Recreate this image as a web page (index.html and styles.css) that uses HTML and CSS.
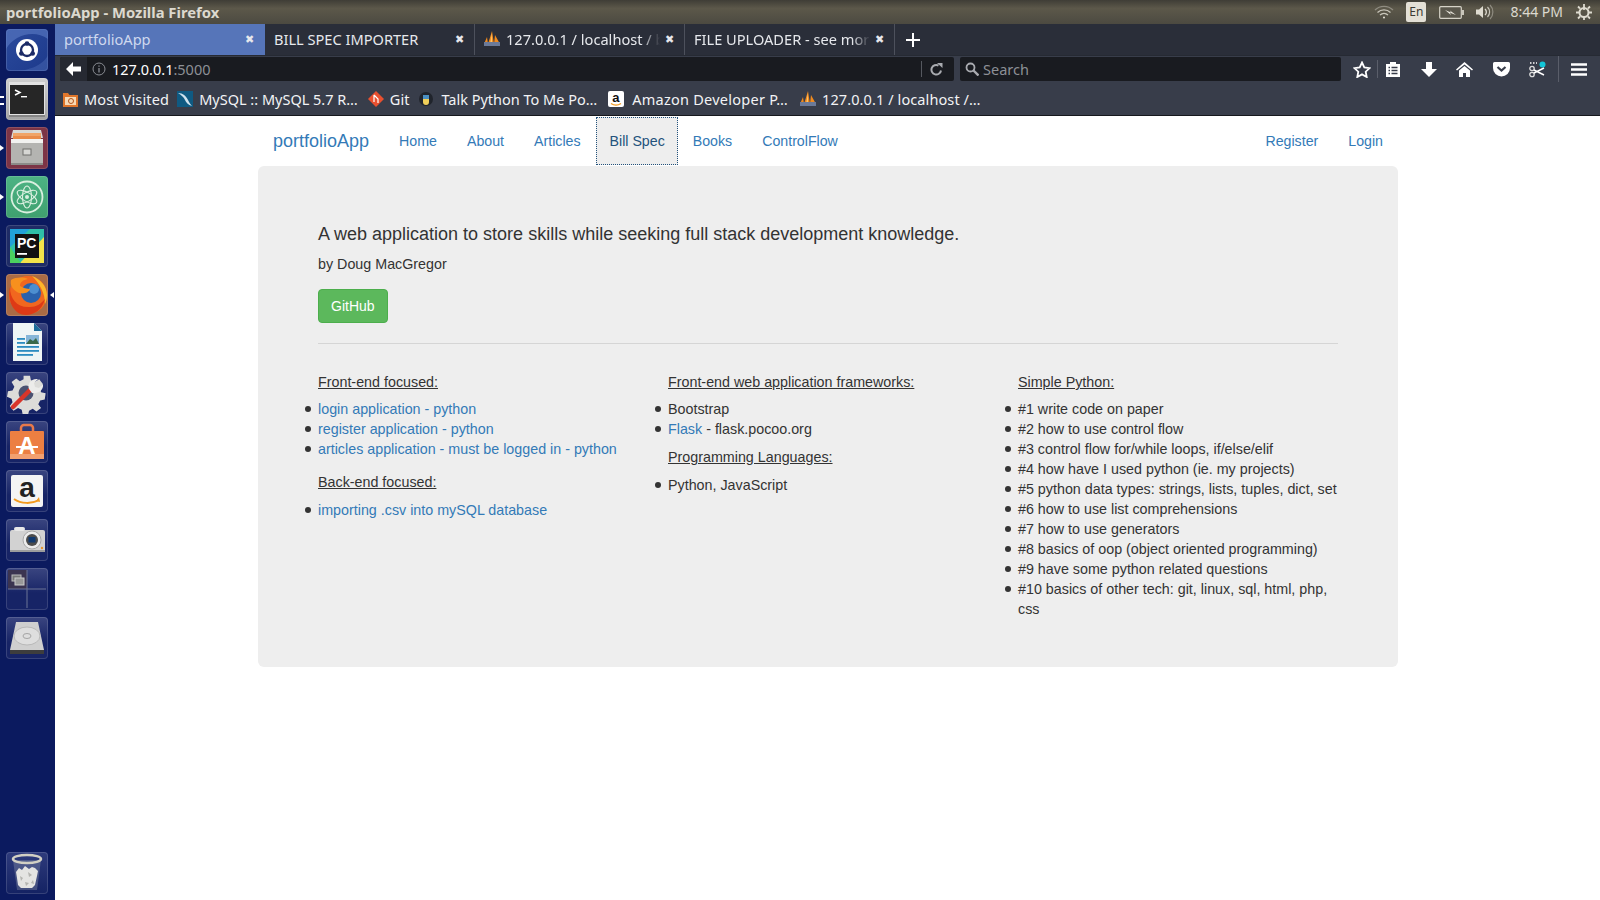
FILE: index.html
```html
<!DOCTYPE html>
<html lang="en">
<head>
    <meta charset="UTF-8">
    <title>portfolioApp - Mozilla Firefox</title>
    <link rel="stylesheet" href="styles.css">
</head>
<body>
    <svg class="defs" width="0" height="0">
        <symbol id="pma" viewBox="0 0 18 16">
            <path d="M1 13 4 6l1 7zM5 13 9 0l2 13zM11 13l1-9 5 9z" fill="#f08a1d"/>
            <path d="M7 13 9 2v11z" fill="#ffc56a"/>
            <rect x="1" y="11" width="16" height="4" fill="#6b7a99"/>
        </symbol>
    </svg>

    <div class="topbar">
        <span class="win-title">portfolioApp - Mozilla Firefox</span>
        <div class="tray">
            <svg class="wifi" width="20" height="14" viewBox="0 0 20 14" fill="none" stroke="#c9c6bb" stroke-width="1.3"><path d="M1 5a13 13 0 0 1 18 0" stroke="#8f8c81"/><path d="M3.5 7.5a9.5 9.5 0 0 1 13 0"/><path d="M6 10a6 6 0 0 1 8 0"/><circle cx="10" cy="12.5" r="1" fill="#e6e3d9" stroke="none"/></svg>
            <span class="lang-box">En</span>
            <svg class="battery" width="25" height="13" viewBox="0 0 25 13"><rect x=".7" y=".7" width="21.600" height="11.600" rx="1" fill="#5a574c" stroke="#d5d2c7" stroke-width="1.200"/><rect x="23" y="4" width="2" height="5" fill="#c9c6bb"/><path d="M6 4l6 2.400L11 4.500 17 9l-6-2.200L12 9z" fill="#e6e3d9"/></svg>
            <svg class="speaker" width="20" height="16" viewBox="0 0 20 16" fill="none"><path d="M1 5.500h3L8 2v12l-4-3.500H1z" fill="#dedbd0"/><path d="M10 5a4 4 0 0 1 0 6" stroke="#dedbd0" stroke-width="1.300"/><path d="M12.500 3a7 7 0 0 1 0 10" stroke="#c9c6bb" stroke-width="1.200"/><path d="M15 1a10 10 0 0 1 0 14" stroke="#8f8c81" stroke-width="1.200"/></svg>
            <span class="clock">8:44 PM</span>
            <svg class="power" width="16" height="16" viewBox="0 0 16 16" fill="none" stroke="#dedbd0" stroke-width="2"><circle cx="8" cy="8.500" r="4.500"/><path d="M8 0v6M8 13v3M0 8.500h3M13 8.500h3M2 2.500l2 2M14 2.500l-2 2M2 14.500l2-2M14 14.500l-2-2" stroke-width="1.800"/></svg>
        </div>
    </div>

    <div class="desktop">
        <aside class="dock">
            <div class="launcher">
                <div class="tile tile-ubuntu">
                    <svg width="42" height="42" viewBox="0 0 42 42"><path d="M0 20C8 6 28 0 42 10V0H0z" fill="#5b7cc4" opacity=".6"/><path d="M42 26C36 38 20 42 8 42h34z" fill="#5b7cc4" opacity=".35"/><circle cx="21" cy="21" r="11" fill="#fff"/><circle cx="21" cy="21" r="6" fill="none" stroke="#1b2a66" stroke-width="2.400"/><circle cx="21" cy="14.500" r="2.300" fill="#1b2a66"/><circle cx="15.300" cy="24.500" r="2.300" fill="#1b2a66"/><circle cx="26.700" cy="24.500" r="2.300" fill="#1b2a66"/></svg>
                </div>
            </div>
            <div class="launcher launcher-double">
                <div class="tile tile-terminal">
                    <svg width="42" height="42" viewBox="0 0 42 42"><rect x="3" y="4" width="36" height="34" fill="#e2e2e2"/><rect x="4" y="7" width="34" height="29" fill="#262626"/><path d="M9 12l5 2.500L9 17" fill="none" stroke="#fff" stroke-width="1.500"/><rect x="15" y="18" width="6" height="1.400" fill="#fff"/><rect x="3" y="37" width="36" height="2" fill="#858585"/></svg>
                </div>
            </div>
            <div class="launcher launcher-running">
                <div class="tile tile-files">
                    <svg width="42" height="42" viewBox="0 0 42 42"><path d="M7 3h28l2 8H5z" fill="#d9d9d6"/><rect x="7" y="6" width="28" height="3" fill="#f0a468"/><rect x="7" y="9" width="28" height="3" fill="#e98b4a"/><rect x="5" y="12" width="32" height="4" fill="#f2f2f0"/><rect x="5" y="16" width="32" height="22" fill="#b4b4b1"/><rect x="5" y="36" width="32" height="2" fill="#8b8b88"/><rect x="17" y="22" width="8" height="6" fill="#d6d6d3" stroke="#6f6f6c"/></svg>
                </div>
            </div>
            <div class="launcher launcher-running">
                <div class="tile tile-atom">
                    <svg width="42" height="42" viewBox="0 0 42 42" fill="none" stroke="#d9efdf" stroke-width="1.100"><circle cx="21" cy="21" r="15.500" stroke-width="1.800"/><ellipse cx="21" cy="21" rx="11" ry="4.500" transform="rotate(30 21 21)"/><ellipse cx="21" cy="21" rx="11" ry="4.500" transform="rotate(-30 21 21)"/><ellipse cx="21" cy="21" rx="4.500" ry="11"/><circle cx="21" cy="21" r="2" fill="#d9efdf" stroke="none"/></svg>
                </div>
            </div>
            <div class="launcher">
                <div class="tile tile-pycharm">
                    <svg width="42" height="42" viewBox="0 0 42 42"><rect x="4" y="4" width="34" height="34" fill="#2fc0a8"/><path d="M4 4h20L4 22z" fill="#21a1d8"/><path d="M38 12v26H14z" fill="#f2e34a"/><path d="M4 22l11 16H4z" fill="#4bd05f"/><rect x="9" y="9" width="24" height="24" fill="#111"/><text x="11" y="23" class="pc-text">PC</text><rect x="11" y="28" width="10" height="1.800" fill="#fff"/></svg>
                </div>
            </div>
            <div class="launcher launcher-running launcher-active">
                <div class="tile tile-firefox">
                    <svg width="42" height="42" viewBox="0 0 42 42"><circle cx="22" cy="21" r="19" fill="#f1671f"/><path d="M26 2c8 3 15 10 15 19 0 4-1 7-2 9 0-11-5-20-13-28z" fill="#fbb62b"/><circle cx="25" cy="19" r="10" fill="#2a62ad"/><circle cx="28" cy="15" r="5" fill="#4d8fd0"/><path d="M4 13c0 12 7 21 20 20 6 0 11-3 15-8-3 11-11 16-19 16C9 41 1 29 4 13z" fill="#de3a16"/><path d="M5 6c5-3 12-3 17-1-5 1-8 3-8 7 3 2 7 3 10 3-1 4-8 6-13 3C6 15 4 11 5 6z" fill="#f7901e"/></svg>
                </div>
            </div>
            <div class="launcher">
                <div class="tile tile-dark">
                    <svg width="42" height="42" viewBox="0 0 42 42"><path d="M7 0h21l8 8v30H7z" fill="#eef5f5"/><path d="M28 0l8 8h-8z" fill="#1d6b9a"/><rect x="11" y="15" width="8" height="1.800" fill="#2c8cc0"/><rect x="11" y="19" width="8" height="1.800" fill="#2c8cc0"/><rect x="11" y="23" width="22" height="1.800" fill="#2c8cc0"/><rect x="11" y="27" width="22" height="1.800" fill="#2c8cc0"/><rect x="11" y="31" width="16" height="1.800" fill="#2c8cc0"/><rect x="20" y="12" width="13" height="9" fill="#86b6d8"/><path d="M20 21l4-5 3 2 3-3 3 6z" fill="#3a6a4a"/></svg>
                </div>
            </div>
            <div class="launcher">
                <div class="tile tile-dark">
                    <svg width="42" height="42" viewBox="0 0 42 42"><path d="M18 4h7l1 5 4 2 5-3 4 5-3 5 1 4 5 1-1 7-5 1-2 4 3 4-5 4-4-3-4 2-1 4h-6l-1-5-4-2-5 3-4-5 3-4-1-4-5-2 1-6 5-1 2-4-3-5 5-4 4 3 4-2z" transform="translate(1 0) scale(.92)" fill="#dcdcd9"/><circle cx="20" cy="21" r="7.500" fill="#4a5170"/><path d="M7 35 25 17" stroke="#d8352a" stroke-width="4.500" stroke-linecap="round"/><path d="M23 17c-2-5 2-11 9-10l-4 4 1 4 4 1 4-4c1 7-6 10-11 9z" fill="#ececea"/></svg>
                </div>
            </div>
            <div class="launcher">
                <div class="tile tile-dark">
                    <svg width="42" height="42" viewBox="0 0 42 42"><path d="M15 12V7a3 3 0 0 1 3-3h6a3 3 0 0 1 3 3v5" fill="none" stroke="#e8794a" stroke-width="2.500"/><rect x="4" y="10" width="34" height="28" rx="1" fill="#ec7f42"/><rect x="4" y="33" width="34" height="5" fill="#f2a070"/><text x="21" y="33" class="store-text">A</text><rect x="10" y="25" width="22" height="2" fill="#fff"/></svg>
                </div>
            </div>
            <div class="launcher">
                <div class="tile tile-dark">
                    <svg width="42" height="42" viewBox="0 0 42 42"><rect x="5" y="5" width="32" height="32" rx="2" fill="#f4f4f4"/><text x="21" y="27" class="amazon-text">a</text><path d="M8 29c7 5 18 5 25 1" fill="none" stroke="#f29a1f" stroke-width="2"/><path d="M33 27l1 5-4-1z" fill="#f29a1f"/></svg>
                </div>
            </div>
            <div class="launcher">
                <div class="tile tile-dark">
                    <svg width="42" height="42" viewBox="0 0 42 42"><rect x="4" y="11" width="35" height="22" rx="2" fill="#d2d2d2"/><rect x="8" y="8" width="11" height="4" rx="2" fill="#e8e8e8"/><circle cx="26" cy="21" r="9" fill="#ececec" stroke="#a8a8a8"/><circle cx="26" cy="21" r="6" fill="#4c4c4c"/><rect x="22.500" y="18" width="7" height="5.500" fill="#123a70"/><circle cx="36" cy="29" r="1.200" fill="#e8952a"/><rect x="4" y="31" width="35" height="2" fill="#9d9d9d"/></svg>
                </div>
            </div>
            <div class="launcher">
                <div class="tile tile-dark">
                    <svg width="42" height="42" viewBox="0 0 42 42"><rect x="2" y="2" width="19" height="19" fill="#3b3450"/><path d="M21 2v38M2 21h38" stroke="#6c7496" stroke-width="1"/><rect x="6" y="7" width="9" height="6" fill="#777" stroke="#bbb"/><rect x="9" y="10" width="9" height="7" fill="#999" stroke="#ccc"/></svg>
                </div>
            </div>
            <div class="launcher">
                <div class="tile tile-dark">
                    <svg width="42" height="42" viewBox="0 0 42 42"><path d="M10 5h22l6 28v4H4v-4z" fill="#cfcfcf"/><ellipse cx="21" cy="19" rx="13" ry="9" fill="#dedede" stroke="#b9b9b9"/><ellipse cx="21" cy="19" rx="4" ry="2.500" fill="none" stroke="#a5a5a5"/><rect x="4" y="33" width="34" height="4" fill="#3d3d3d"/></svg>
                </div>
            </div>
            <div class="launcher launcher-bottom">
                <div class="tile tile-trash">
                    <svg width="42" height="42" viewBox="0 0 42 42"><path d="M7 8l4 30h20l4-30z" fill="#aab0b8" opacity=".3"/><path d="M10 20l3-4 3 2 3-4 4 3 3-2 3 1 3 3-1 5-2 9-3 3H15l-3-3-1-7z" fill="#e4e4e2"/><path d="M14 24l3 2-2 3zM22 20l4 3-3 2zM19 30l4 1-3 3zM27 28l1 4-3-1z" fill="#b4b4b0"/><ellipse cx="21" cy="7" rx="14" ry="4" fill="none" stroke="#d2d0c4" stroke-width="2.500"/></svg>
                </div>
            </div>
        </aside>

        <div class="browser">
            <div class="tabs">
                <div class="tab tab-active"><span class="tab-label">portfolioApp</span><span class="tab-close">&#10006;</span></div>
                <div class="tab"><span class="tab-label">BILL SPEC IMPORTER</span><span class="tab-close">&#10006;</span></div>
                <div class="tab"><svg class="tab-icon" width="18" height="16"><use href="#pma"/></svg><span class="tab-label tab-fade">127.0.0.1 / localhost / b</span><span class="tab-close">&#10006;</span></div>
                <div class="tab"><span class="tab-label tab-fade">FILE UPLOADER - see mor</span><span class="tab-close">&#10006;</span></div>
                <svg class="new-tab" width="16" height="16" viewBox="0 0 16 16"><path d="M8 1v14M1 8h14" stroke="#fff" stroke-width="2"/></svg>
            </div>

            <div class="toolbar">
                <div class="urlbar">
                    <span class="back-btn">
                        <svg width="15" height="14" viewBox="0 0 15 14"><path d="M7 0 0 7l7 7V9.500h8v-5H7z" fill="#fff"/></svg>
                    </span>
                    <svg class="info-icon" width="14" height="14" viewBox="0 0 14 14" fill="none"><circle cx="7" cy="7" r="6" stroke="#8a8d94"/><path d="M7 6v4.500M7 3.500v1.300" stroke="#8a8d94" stroke-width="1.300"/></svg>
                    <span class="url">127.0.0.1<span class="url-port">:5000</span></span>
                    <span class="reload">
                        <svg width="13" height="13" viewBox="0 0 13 13" fill="none"><path d="M11 7.500A4.800 4.800 0 1 1 8.500 2.500" stroke="#a9abb0" stroke-width="2"/><path d="M7 0h5.500v5z" fill="#a9abb0"/></svg>
                    </span>
                </div>
                <div class="searchbar">
                    <svg width="14" height="14" viewBox="0 0 14 14" fill="none" stroke="#a9abb0" stroke-width="1.800"><circle cx="5.500" cy="5.500" r="4"/><path d="M8.500 8.500l5 5" stroke-width="2.400"/></svg>
                    <span>Search</span>
                </div>
                <div class="tool-icons">
                    <svg class="tool-star" width="18" height="17" viewBox="0 0 18 17"><path d="M9 1.500l2.300 4.900 5.300.7-3.900 3.600 1 5.300L9 13.400l-4.700 2.600 1-5.300-3.900-3.600 5.300-.7z" fill="none" stroke="#fff" stroke-width="1.800"/></svg>
                    <i class="tool-sep"></i>
                    <svg class="tool-clip" width="16" height="16" viewBox="0 0 16 16"><path d="M1 3h4V1h6v2h4v13H1z" fill="#fff"/><path d="M3.500 6.500h1.500M3.500 9.500h1.500M3.500 12.500h1.500M6.500 6.500h6M6.500 9.500h6M6.500 12.500h6" stroke="#383d4a" stroke-width="1.300"/></svg>
                    <svg class="tool-down" width="16" height="15" viewBox="0 0 16 15"><path d="M5 0h6v7h5l-8 8-8-8h5z" fill="#fff"/></svg>
                    <svg class="tool-home" width="17" height="15" viewBox="0 0 17 15"><path d="M8.500 0 0 7.500l1 1 7.500-6 7.500 6 1-1z" fill="#fff"/><path d="M8.500 4 3 8.500V15h4v-4h3v4h4V8.500z" fill="#fff"/></svg>
                    <svg class="tool-pocket" width="17" height="15" viewBox="0 0 17 15"><path d="M1.500 0h14A1.500 1.500 0 0 1 17 1.500V6a8.500 8.500 0 0 1-17 0V1.500A1.500 1.500 0 0 1 1.500 0z" fill="#fff"/><path d="M4.500 5l4 3.500 4-3.500" fill="none" stroke="#383d4a" stroke-width="2.200"/></svg>
                    <svg class="tool-cut" width="18" height="17" viewBox="0 0 18 17" fill="none"><path d="M1 2h7" stroke="#fff" stroke-width="1.500" stroke-dasharray="1.500 1.500"/><circle cx="13.500" cy="3.500" r="3" fill="#12c6d8"/><circle cx="3" cy="13.500" r="2.200" stroke="#ddd" stroke-width="1.300"/><circle cx="3" cy="7.500" r="2.200" stroke="#ddd" stroke-width="1.300"/><path d="M5 12 15 7M5 9l10 5" stroke="#fff" stroke-width="1.500"/></svg>
                    <i class="tool-sep tool-sep-tall"></i>
                    <svg class="tool-menu" width="16" height="13" viewBox="0 0 16 13"><path d="M0 1.500h16M0 6.500h16M0 11.500h16" stroke="#fff" stroke-width="2.600"/></svg>
                </div>
            </div>

            <div class="bookmarks">
                <span class="bookmark bookmark-most">
                    <svg width="15" height="16" viewBox="0 0 15 16"><path d="M0 2h5l1.500 2H15v12H0z" fill="#e0762b"/><rect x="2" y="6" width="11" height="8" fill="#f7d9b5"/><circle cx="8" cy="10" r="2.500" fill="none" stroke="#b5541a"/></svg>
                    Most Visited
                </span>
                <span class="bookmark">
                    <svg width="16" height="16" viewBox="0 0 16 16"><rect width="16" height="16" fill="#0f5a82"/><path d="M1 2c5 0 8 3 10 7 1 2 2 4 4 6-4-1-6-4-7-6C7 6 4 4 1 2z" fill="#cfe2ee"/></svg>
                    MySQL :: MySQL 5.7 R&hellip;
                </span>
                <span class="bookmark bookmark-git">
                    <svg width="16" height="16" viewBox="0 0 16 16"><path d="M8 0l8 8-8 8-8-8z" fill="#e9502f"/><path d="M6 4l4 4v4M6 4v7" stroke="#fff" stroke-width="1.200" fill="none"/></svg>
                    Git
                </span>
                <span class="bookmark bookmark-talk">
                    <svg width="14" height="16" viewBox="0 0 14 16"><circle cx="7" cy="8" r="7" fill="#20242c"/><path d="M4 4h6v4H4z" fill="#4a8fc2"/><path d="M4 8h6v3a3 3 0 0 1-6 0z" fill="#f0cf5a"/></svg>
                    Talk Python To Me Po&hellip;
                </span>
                <span class="bookmark bookmark-amazon">
                    <svg width="16" height="16" viewBox="0 0 16 16"><rect width="16" height="16" rx="2" fill="#fff"/><text x="8" y="11" class="amazon-small">a</text><path d="M3 12.500c3 2 7 2 10 0" stroke="#f29a1f" fill="none" stroke-width="1.300"/></svg>
                    Amazon Developer P&hellip;
                </span>
                <span class="bookmark bookmark-pma">
                    <svg width="18" height="16"><use href="#pma"/></svg>
                    127.0.0.1 / localhost /&hellip;
                </span>
            </div>

            <div class="page">
                <div class="container">
                    <nav class="navbar">
                        <a class="brand" href="#">portfolioApp</a>
                        <ul class="nav">
                            <li><a href="#">Home</a></li>
                            <li><a href="#">About</a></li>
                            <li><a href="#">Articles</a></li>
                            <li><a class="focused" href="#">Bill Spec</a></li>
                            <li><a href="#">Books</a></li>
                            <li><a href="#">ControlFlow</a></li>
                        </ul>
                        <ul class="nav nav-right">
                            <li><a href="#">Register</a></li>
                            <li><a href="#">Login</a></li>
                        </ul>
                    </nav>

                    <div class="jumbotron">
                        <h1 class="lead">A web application to store skills while seeking full stack development knowledge.</h1>
                        <p class="byline">by Doug MacGregor</p>
                        <a class="btn-github" href="#">GitHub</a>
                        <hr>
                        <div class="row">
                            <div class="col">
                                <p class="list-title">Front-end focused:</p>
                                <ul>
                                    <li><a href="#">login application - python</a></li>
                                    <li><a href="#">register application - python</a></li>
                                    <li><a href="#">articles application - must be logged in - python</a></li>
                                </ul>
                                <p class="list-title list-title-far">Back-end focused:</p>
                                <ul>
                                    <li><a href="#">importing .csv into mySQL database</a></li>
                                </ul>
                            </div>
                            <div class="col">
                                <p class="list-title">Front-end web application frameworks:</p>
                                <ul>
                                    <li>Bootstrap</li>
                                    <li><a href="#">Flask</a> - flask.pocoo.org</li>
                                </ul>
                                <p class="list-title list-title-next">Programming Languages:</p>
                                <ul>
                                    <li>Python, JavaScript</li>
                                </ul>
                            </div>
                            <div class="col">
                                <p class="list-title">Simple Python:</p>
                                <ul>
                                    <li>#1 write code on paper</li>
                                    <li>#2 how to use control flow</li>
                                    <li>#3 control flow for/while loops, if/else/elif</li>
                                    <li>#4 how have I used python (ie. my projects)</li>
                                    <li>#5 python data types: strings, lists, tuples, dict, set</li>
                                    <li>#6 how to use list comprehensions</li>
                                    <li>#7 how to use generators</li>
                                    <li>#8 basics of oop (object oriented programming)</li>
                                    <li>#9 have some python related questions</li>
                                    <li>#10 basics of other tech: git, linux, sql, html, php, css</li>
                                </ul>
                            </div>
                        </div>
                    </div>
                </div>
            </div>
        </div>
    </div>
</body>
</html>
```

FILE: styles.css
```css
* {
    box-sizing: border-box;
}
html, body {
    height: 100%;
}
body {
    margin: 0;
    display: flex;
    flex-direction: column;
    overflow: hidden;
    font-family: "Liberation Sans", Arial, sans-serif;
    font-size: 14px;
    line-height: 20px;
    color: #333;
    background: #fff;
}
.defs {
    position: absolute;
}
svg {
    flex-shrink: 0;
    display: block;
}

/* ubuntu top panel */
.topbar {
    height: 24px;
    display: flex;
    align-items: center;
    justify-content: space-between;
    background: linear-gradient(#3f3d36, #5c584a 35%, #4c4a41);
    color: #dcd9cf;
    font-family: "Noto Sans", sans-serif;
}
.win-title {
    padding-left: 6px;
    font-size: 14.8px;
    font-weight: bold;
}
.tray {
    display: flex;
    align-items: center;
}
.wifi {
    margin-right: 12px;
}
.lang-box {
    width: 20px;
    height: 20px;
    margin-right: 13px;
    background: #e4e0d6;
    border-radius: 2px;
    color: #3c3b35;
    font-size: 12px;
    line-height: 20px;
    text-align: center;
}
.battery {
    margin-right: 11px;
}
.speaker {
    margin-right: 15px;
}
.clock {
    font-size: 14px;
    margin-right: 13px;
}
.power {
    margin-right: 8px;
}

.desktop {
    flex: 1;
    display: flex;
    min-height: 0;
}

/* launcher */
.dock {
    width: 55px;
    flex-shrink: 0;
    display: flex;
    flex-direction: column;
    gap: 7px;
    padding: 5px 0 6px 6px;
    background: #0b1a5f;
}
.launcher {
    position: relative;
    flex-shrink: 0;
}
.launcher-bottom {
    margin-top: auto;
}
.launcher-running::before,
.launcher-active::after {
    content: "";
    position: absolute;
    top: 18px;
    border-top: 3px solid transparent;
    border-bottom: 3px solid transparent;
}
.launcher-running::before {
    left: -6px;
    border-left: 4px solid #fff;
}
.launcher-active::after {
    left: 44px;
    border-right: 4px solid #fff;
}
.launcher-double::before {
    content: "";
    position: absolute;
    left: -6px;
    top: 18px;
    width: 4px;
    height: 5px;
    border-top: 2px solid #fff;
    border-bottom: 2px solid #fff;
}
.tile {
    width: 42px;
    height: 42px;
    border-radius: 4px;
    overflow: hidden;
    box-shadow: inset 0 0 0 1px rgba(255,255,255,0.14);
}
.tile-ubuntu {
    background: linear-gradient(135deg, #2b4a9c, #1d3a8c);
}
.tile-terminal {
    background: linear-gradient(#cfcfcf, #a3a3a3);
}
.tile-files {
    background: #7c3446;
}
.tile-atom {
    background: linear-gradient(#4cb384, #3fa06f);
}
.tile-pycharm {
    background: #1f2c66;
}
.tile-firefox {
    background: #a96b45;
}
.tile-dark {
    background: linear-gradient(#3a4580, #172466 60%);
}
.tile-trash {
    background: linear-gradient(#2e3b7c, #142263);
}
.pc-text {
    font-family: "Liberation Sans", sans-serif;
    font-size: 14px;
    font-weight: bold;
    fill: #fff;
}
.store-text {
    font-family: "Liberation Sans", sans-serif;
    font-size: 24px;
    font-weight: bold;
    fill: #fff;
    text-anchor: middle;
}
.amazon-text {
    font-family: "Liberation Sans", sans-serif;
    font-size: 28px;
    font-weight: bold;
    fill: #222;
    text-anchor: middle;
}
.amazon-small {
    font-family: "Liberation Sans", sans-serif;
    font-size: 13px;
    font-weight: bold;
    fill: #111;
    text-anchor: middle;
}

/* firefox chrome */
.browser {
    flex: 1;
    min-width: 0;
    display: flex;
    flex-direction: column;
    font-family: "Noto Sans", sans-serif;
}
.tabs {
    height: 31px;
    display: flex;
    align-items: stretch;
    background: #2a2e39;
    font-size: 14.6px;
    color: #e6e8ec;
}
.tab {
    width: 210px;
    display: flex;
    align-items: center;
    gap: 5px;
    padding: 0 10px 2px 9px;
    border-right: 1px solid #4d515c;
}
.tab-active {
    padding-right: 11px;
    background: #5675b9;
    color: #cfd9ef;
    border-right: 0;
}
.tab-icon {
    margin-left: -1px;
}
.tab-label {
    flex: 1;
    min-width: 0;
    overflow: hidden;
    white-space: nowrap;
}
.tab-fade {
    mask-image: linear-gradient(to left, transparent, #000 18px);
}
.tab-close {
    font-size: 11px;
    color: #e6e8ec;
}
.new-tab {
    margin: 8px 0 0 10px;
}
.toolbar {
    height: 30px;
    display: flex;
    align-items: center;
    padding: 0 0 3px 5px;
    background: #383d4a;
    border-top: 1px solid #262a33;
    font-size: 14.5px;
}
.urlbar, .searchbar {
    height: 24px;
    display: flex;
    align-items: center;
    background: #191b20;
    border-radius: 2px;
}
.urlbar {
    width: 894px;
    color: #fff;
}
.back-btn {
    width: 27px;
    height: 24px;
    display: flex;
    align-items: center;
    justify-content: center;
    background: #262932;
    border-radius: 2px 0 0 2px;
}
.info-icon {
    margin: 0 6px 0 5px;
}
.url {
    flex: 1;
}
.url-port {
    color: #8d9096;
}
.reload {
    width: 29px;
    height: 16px;
    margin-right: 4px;
    display: flex;
    align-items: center;
    justify-content: center;
    border-left: 1px solid #55585f;
}
.searchbar {
    width: 381px;
    margin-left: 6px;
    padding-left: 5px;
    gap: 4px;
    color: #8d9096;
}
.tool-icons {
    flex: 1;
    display: flex;
    align-items: center;
    height: 24px;
}
.tool-star {
    margin-left: 12px;
}
.tool-sep {
    width: 1px;
    height: 18px;
    margin-left: 6px;
    background: #5a5e6a;
}
.tool-sep-tall {
    height: 26px;
    margin-left: 11px;
}
.tool-clip {
    margin-left: 7px;
}
.tool-down {
    margin-left: 20px;
}
.tool-home {
    margin-left: 19px;
}
.tool-pocket {
    margin-left: 20px;
}
.tool-cut {
    margin-left: 19px;
}
.tool-menu {
    margin-left: 12px;
}
.bookmarks {
    height: 31px;
    display: flex;
    align-items: center;
    gap: 8px;
    padding: 0 0 3px 8px;
    background: #383d4a;
    border-bottom: 1px solid #16181d;
    color: #f2f3f5;
    font-size: 14.5px;
}
.bookmark {
    display: flex;
    align-items: center;
    gap: 6px;
    white-space: nowrap;
}
.bookmark-most {
    letter-spacing: .15px;
}
.bookmark-git {
    margin-left: 2px;
}
.bookmark-talk {
    margin-left: 2px;
    gap: 8px;
}
.bookmark-amazon {
    margin-left: 3px;
    gap: 8px;
    letter-spacing: .25px;
}
.bookmark-pma {
    margin-left: 3px;
    gap: 5px;
    letter-spacing: .1px;
}

/* the page itself */
.page {
    flex: 1;
    font-family: "Liberation Sans", Arial, sans-serif;
    font-size: 14px;
    line-height: 20px;
    color: #333;
    background: #fff;
}
.page a {
    color: #337ab7;
    text-decoration: none;
}
.container {
    width: 1140px;
    margin: 0 auto;
    position: relative;
    left: 0.5px;
}
.navbar {
    height: 50px;
    display: flex;
    align-items: center;
}
.page .brand {
    padding: 15px;
    font-size: 18px;
}
.nav {
    display: flex;
    list-style: none;
    margin: 0;
    padding: 0;
    font-size: 14.2px;
}
.nav a {
    display: block;
    padding: 15px;
}
.page .nav .focused {
    height: 48px;
    margin-top: 1px;
    padding: 14px 13px 0 14px;
    color: #23527c;
    background: #eee;
    outline: 1px dotted #23527c;
    outline-offset: -1px;
}
.nav-right {
    margin-left: auto;
}
.jumbotron {
    height: 501px;
    padding: 57px 60px 0;
    background: #eee;
    border-radius: 6px;
}
.lead {
    margin: 0 0 9px;
    font-size: 18px;
    font-weight: normal;
    line-height: 22px;
}
.byline {
    margin: 0 0 15px;
    font-size: 14.3px;
}
.page .btn-github {
    display: inline-block;
    padding: 6px 12px;
    color: #fff;
    background: #5cb85c;
    border: 1px solid #4cae4c;
    border-radius: 4px;
}
hr {
    margin: 20px 0 28px;
    border: 0;
    border-top: 1px solid #d5d5d5;
}
.row {
    display: grid;
    grid-template-columns: repeat(3, 320px);
    gap: 30px;
    font-size: 14.3px;
}
.list-title {
    margin: 0 0 7px;
    text-decoration: underline;
}
.list-title-far {
    margin: 13px 0 8px;
}
.list-title-next {
    margin-bottom: 8px;
}
.col ul {
    margin: 0 0 8px;
    padding: 0;
    list-style: none;
}
.col li {
    position: relative;
}
.col li::before {
    content: "";
    position: absolute;
    left: -13px;
    top: 7px;
    width: 6px;
    height: 6px;
    border-radius: 50%;
    background: #333;
}
```
